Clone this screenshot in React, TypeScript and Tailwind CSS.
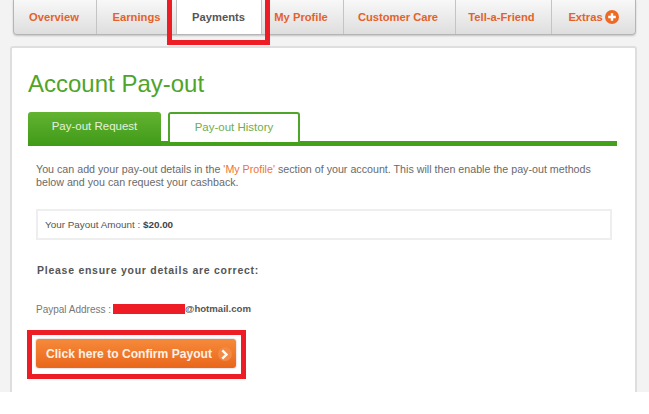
import React from "react";

const items = [
  { label: "Overview", w: "w-[83px]", pad: "pr-[2px]" },
  { label: "Earnings", w: "w-[80px]", pad: "" },
  { label: "Payments", w: "w-[85px]", active: true, pad: "pr-[1px]" },
  { label: "My Profile", w: "w-[82px]", pad: "pr-[3px]" },
  { label: "Customer Care", w: "w-[112px]", pad: "pr-[3px]" },
  { label: "Tell-a-Friend", w: "w-[96px]", pad: "pr-[4px]" },
  { label: "Extras", w: "w-[83px]", plus: true, pad: "" },
];

export default function App() {
  return (
    <div className="relative w-[649px] h-[414px] overflow-hidden bg-white font-['Liberation_Sans',Arial,sans-serif]">
      <div className="h-[392px] overflow-hidden bg-[#f3f3f3] pl-[10px] pr-[12px]">
        <nav className="ml-[3px] mr-[1px] flex h-[35px] rounded-b-[4px] border border-t-0 border-[#b5b5b5] bg-gradient-to-b from-[#f8f8f8] to-[#dedede] shadow-[0_1px_2px_rgba(0,0,0,0.2)]">
          {items.map((it) => (
            <div
              key={it.label}
              className={`${it.w} ${it.pad} flex shrink-0 items-center justify-center border-r border-[#c4c4c4] text-[11.2px] font-bold last:border-r-0 ${
                it.active ? "bg-white text-[#555]" : "text-[#e4622a]"
              }`}
            >
              {it.label}
              {it.plus && (
                <svg viewBox="0 0 14 14" className="ml-[2px] h-[14px] w-[14px]">
                  <circle cx="7" cy="7" r="7" fill="#ee6a24" />
                  <path d="M7 3.2v7.6M3.2 7h7.6" stroke="#fff" strokeWidth="2.4" />
                </svg>
              )}
            </div>
          ))}
        </nav>

        <main className="mt-[11px] h-[360px] rounded-[3px] border-2 border-[#dedede] bg-white pl-[16px] pr-[18px] pt-[21px]">
          <h1 className="text-[24px] leading-[30px] text-[#4fa42a]">Account Pay-out</h1>

          <div className="mt-[13px] flex h-[34px] items-start gap-[7px] border-b-[5px] border-[#45a01c]">
            <div className="flex h-[34px] w-[133px] items-center justify-center rounded-t-[3px] bg-gradient-to-b from-[#62b330] to-[#3f9a18] pb-[4px] text-[11.5px] text-[#e4f2da]">
              Pay-out Request
            </div>
            <div className="flex h-[30px] w-[132px] items-center justify-center rounded-t-[3px] border-2 border-b-0 border-[#4fa42a] bg-white text-[11.5px] text-[#6fae4c]">
              Pay-out History
            </div>
          </div>

          <div className="pl-[8px] pr-[5px]">
            <p className="mt-[17px] text-[10.7px] leading-[13px] text-[#6a6a6a]">
              You can add your pay-out details in the <span className="text-[#ee7333]">'My Profile'</span> section of your account. This will then enable the pay-out methods
              <br />
              below and you can request your cashback.
            </p>

            <div className="mt-[20px] flex h-[31px] items-center border-2 border-[#eeeeee] pl-[7px] pt-px text-[9.9px] text-[#555]">
              Your Payout Amount :&nbsp;<b className="text-[#444]">$20.00</b>
            </div>

            <h2 className="mt-[24px] pl-px text-[10.5px] font-bold leading-[13px] tracking-[0.74px] text-[#555]">
              Please ensure your details are correct:
            </h2>

            <div className="mt-[26px] flex h-[12px] items-center text-[10px] text-[#777]">
              Paypal Address :
              <span className="ml-[2px] h-[10px] w-[72px] bg-[#ee1c25]" />
              <b className="text-[9.6px] text-[#555]">@hotmail.com</b>
            </div>

            <button className="mt-[24px] flex h-[29px] w-[200px] items-center rounded-[3px] bg-gradient-to-b from-[#f68a3a] to-[#e9661a] pl-[10px] pt-px text-[12.1px] font-bold text-[#fdf1e6] shadow-[0_0_2px_rgba(0,0,0,0.35)]">
              Click here to Confirm Payout
              <span className="ml-[6px] flex h-[14px] w-[14px] items-center justify-center rounded-full bg-[#f28a45]">
                <svg viewBox="0 0 10 10" className="h-[11px] w-[11px]">
                  <path d="M3 1.2 6.8 5 3 8.8" fill="none" stroke="#fff" strokeWidth="2.2" />
                </svg>
              </span>
            </button>
          </div>
        </main>
      </div>

      <div className="absolute left-[167px] top-[-5px] h-[50px] w-[103px] border-[5px] border-[#ee1c25]" />
      <div className="absolute left-[27px] top-[330px] h-[49px] w-[219px] border-[5px] border-[#ee1c25]" />
    </div>
  );
}
